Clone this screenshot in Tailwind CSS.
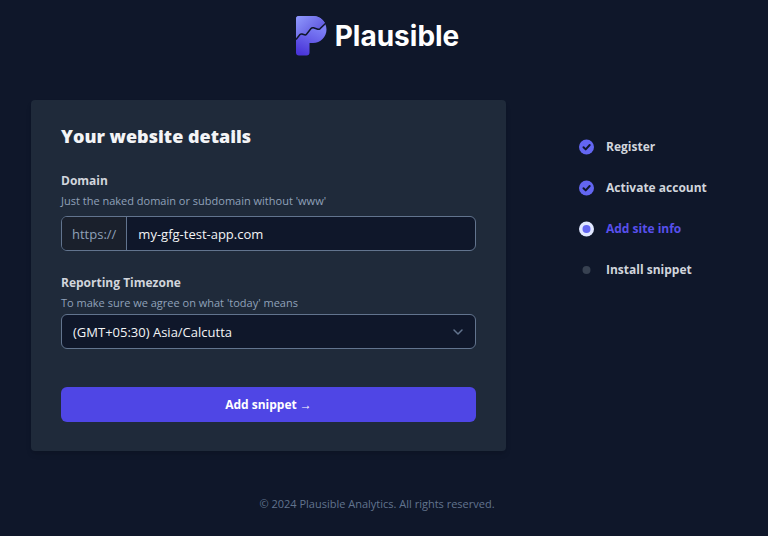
<!DOCTYPE html>
<html lang="en">
  <head>
    <meta charset="UTF-8" />
    <meta name="viewport" content="width=device-width, initial-scale=1.0" />
    <script src="https://cdn.jsdelivr.net/npm/@tailwindcss/browser@4"></script>
    <title>Plausible</title>
  </head>
  <body class="flex min-h-screen flex-col bg-[#0f172a] font-['Open_Sans',sans-serif] text-[13px] leading-5 text-gray-100">
    <header class="flex justify-center pt-3.5 pr-3.5">
      <a href="#" class="flex items-center gap-2">
        <svg class="h-[41px] w-8" viewBox="0 0 32 41" aria-hidden="true">
          <defs>
            <linearGradient id="top" gradientUnits="userSpaceOnUse" x1="2" y1="2" x2="24" y2="26">
              <stop offset="0" stop-color="#8e97fc" />
              <stop offset="1" stop-color="#5448d8" />
            </linearGradient>
            <linearGradient id="bottom" gradientUnits="userSpaceOnUse" x1="20" y1="12" x2="8" y2="40">
              <stop offset="0" stop-color="#7c7ef6" />
              <stop offset="1" stop-color="#4a35d8" />
            </linearGradient>
          </defs>
          <path fill="url(#bottom)" d="M4 1H18C25.500 1 31.500 7 31.500 14.500S25.500 28 18 28H14.500V37.500Q14.500 40.500 11.500 40.500H4Q1 40.500 1 37.500V4Q1 1 4 1Z" />
          <path fill="url(#top)" d="M4 1H18C23.500 1 28 4 30.300 8.500L25 13.800Q24 14.600 22.800 14.200L18.500 12.800Q17 12.400 16 13.500L11.500 19.200Q10.700 20.200 9.500 19.800L7 19Q5.800 18.700 5 19.600L1 24V4Q1 1 4 1Z" />
          <path fill="none" stroke="#0f172a" stroke-width="1.500" d="M1 24.500L5 19.600Q5.800 18.700 7 19L9.500 19.800Q10.700 20.200 11.500 19.200L16 13.500Q17 12.400 18.500 12.800L22.800 14.200Q24 14.600 25 13.800L31 8" />
        </svg>
        <span class="pt-0.5 font-[Inter,sans-serif] text-[28px] leading-10 font-bold text-white">Plausible</span>
      </a>
    </header>

    <main class="mt-11 flex items-start gap-[73px] px-[31px]">
      <form class="flex-1 rounded-sm bg-[#1f2a3a] px-[30px] pt-[22px] pb-[29px] shadow-md">
        <h1 class="text-[18px] leading-7 font-extrabold">Your website details</h1>

        <div class="mt-[21px]">
          <label for="domain" class="block text-[12px] leading-5 font-bold text-gray-300">Domain</label>
          <p class="mt-0.5 text-[11px] leading-4 text-slate-400">Just the naked domain or subdomain without 'www'</p>
          <div class="mt-[7px] flex h-[35px] overflow-hidden rounded-md border border-slate-500 bg-[#0f172a]">
            <span class="flex items-center border-r border-slate-500 bg-[#1a202c] px-2.5 text-slate-400">https://</span>
            <input id="domain" type="text" value="my-gfg-test-app.com" class="min-w-0 flex-1 bg-transparent px-[11px] outline-none" />
          </div>
        </div>

        <div class="mt-[22px]">
          <label for="timezone" class="block text-[12px] leading-5 font-bold text-gray-300">Reporting Timezone</label>
          <p class="mt-0.5 text-[11px] leading-4 text-slate-400">To make sure we agree on what 'today' means</p>
          <div class="mt-[3px] grid">
            <select id="timezone" class="col-start-1 row-start-1 h-[35px] appearance-none rounded-md border border-slate-500 bg-[#0f172a] px-[11px] outline-none">
              <option>(GMT+05:30) Asia/Calcutta</option>
            </select>
            <svg class="pointer-events-none col-start-1 row-start-1 mr-3 h-3 w-3 self-center justify-self-end text-slate-500" viewBox="0 0 12 12" fill="none" stroke="currentColor" stroke-width="1.500" stroke-linecap="round" stroke-linejoin="round" aria-hidden="true">
              <path d="M2 4l4 4 4-4" />
            </svg>
          </div>
        </div>

        <button type="submit" class="mt-[38px] h-[35px] w-full rounded-md bg-[#4f46e5] text-[12px] leading-5 font-bold text-white">Add snippet →</button>
      </form>

      <ol class="mt-[37px] flex w-[158px] flex-col gap-[21px] text-[12px] leading-5 font-bold text-gray-300">
        <li class="flex items-center gap-[11px]">
          <svg class="h-4 w-4" viewBox="0 0 16 16" aria-hidden="true">
            <circle cx="7.500" cy="8" r="7.500" fill="#6366f1" />
            <path d="M4.500 8.200l2.200 2.200 4-4.400" fill="none" stroke="#0f172a" stroke-width="2" stroke-linecap="round" stroke-linejoin="round" />
          </svg>
          Register
        </li>
        <li class="flex items-center gap-[11px]">
          <svg class="h-4 w-4" viewBox="0 0 16 16" aria-hidden="true">
            <circle cx="7.500" cy="8" r="7.500" fill="#6366f1" />
            <path d="M4.500 8.200l2.200 2.200 4-4.400" fill="none" stroke="#0f172a" stroke-width="2" stroke-linecap="round" stroke-linejoin="round" />
          </svg>
          Activate account
        </li>
        <li class="flex items-center gap-[11px] text-[#5850ec]" aria-current="step">
          <svg class="h-4 w-4" viewBox="0 0 16 16" aria-hidden="true">
            <circle cx="7.500" cy="8" r="7.500" fill="#e0e7ff" />
            <circle cx="7.500" cy="8" r="4" fill="#6366f1" />
          </svg>
          Add site info
        </li>
        <li class="flex items-center gap-[11px]">
          <svg class="h-4 w-4" viewBox="0 0 16 16" aria-hidden="true">
            <circle cx="7.500" cy="8" r="4" fill="#374151" />
          </svg>
          Install snippet
        </li>
      </ol>
    </main>

    <footer class="mt-[43px] pr-3.5 text-center text-[11px] text-slate-500">© 2024 Plausible Analytics. All rights reserved.</footer>
  </body>
</html>
